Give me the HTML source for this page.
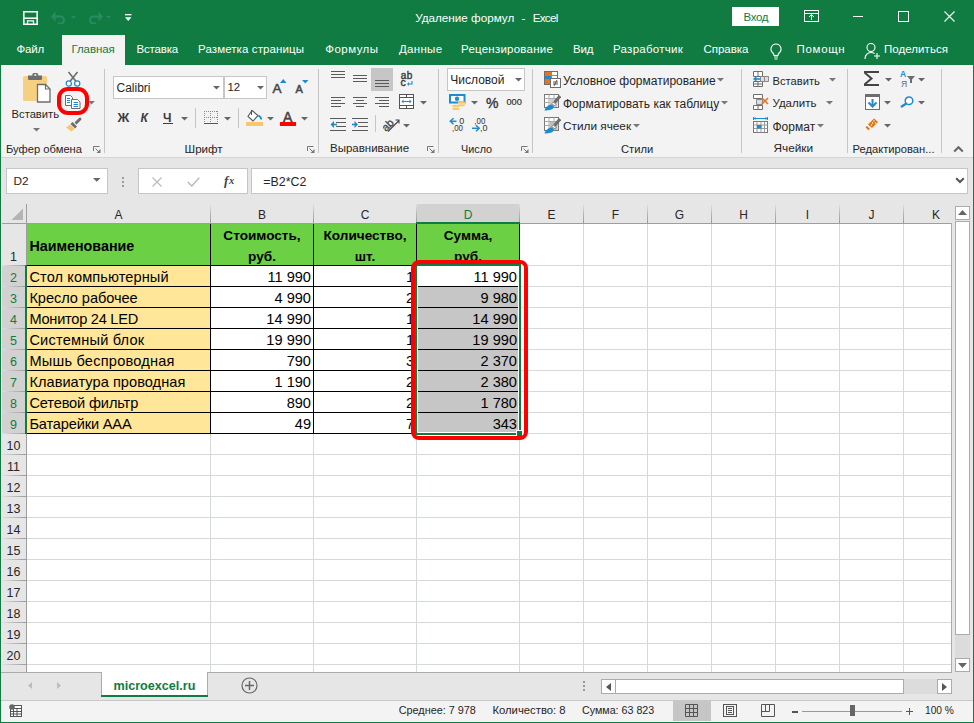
<!DOCTYPE html><html><head><meta charset="utf-8"><style>
*{box-sizing:border-box;margin:0;padding:0}
html,body{width:974px;height:723px;overflow:hidden;background:#107c41;font-family:"Liberation Sans",sans-serif;color:#262626;position:relative}
.a{position:absolute}
.t{position:absolute;white-space:nowrap;line-height:1}
.c{position:absolute;font-size:14.6px;color:#000;white-space:nowrap;line-height:1}
.cb{position:absolute;font-size:13.6px;font-weight:bold;color:#000;white-space:nowrap;line-height:1}
.hl{position:absolute;height:1px}
.vl{position:absolute;width:1px}
</style></head><body>
<div class="a" style="left:0px;top:0px;width:974px;height:65px;background:#107c41;"></div>
<svg class="a" style="left:23px;top:11px" width="15" height="14" viewBox="0 0 15 14"><path d="M0.8 0.8h13.4v12.4H0.8z" fill="none" stroke="#fff" stroke-width="1.6"/><path d="M0.8 7.2h13.4" stroke="#fff" stroke-width="1.5"/><path d="M4.5 13V9.8h6V13" fill="none" stroke="#fff" stroke-width="1.3"/></svg>
<svg class="a" style="left:51px;top:11px" width="16" height="13" viewBox="0 0 16 13"><path d="M3 5.5h6.5a3.5 3.5 0 0 1 0 7H7" fill="none" stroke="#2a8a62" stroke-width="2.2"/><path d="M0 5.5l4.5-5v10z" fill="#2a8a62"/></svg>
<svg class="a" style="left:71px;top:16px" width="6" height="3" viewBox="0 0 6 3"><path d="M0 0h5L2.5 2.5z" fill="#2a8a62"/></svg>
<svg class="a" style="left:87px;top:11px" width="16" height="13" viewBox="0 0 16 13"><path d="M13 5.5H6.5a3.5 3.5 0 0 0 0 7H9" fill="none" stroke="#2a8a62" stroke-width="2.2"/><path d="M16 5.5l-4.5-5v10z" fill="#2a8a62"/></svg>
<svg class="a" style="left:106px;top:16px" width="6" height="3" viewBox="0 0 6 3"><path d="M0 0h5L2.5 2.5z" fill="#2a8a62"/></svg>
<svg class="a" style="left:125px;top:14px" width="7" height="8" viewBox="0 0 7 8"><rect x="0" y="0" width="6.5" height="1.3" fill="#fff"/><path d="M0 3.2h6.5L3.25 7z" fill="#fff"/></svg>
<div class="t" style="left:415.2px;top:11.90px;font-size:11.70px;color:#fff;">Удаление формул</div>
<div class="t" style="left:521.5px;top:11.90px;font-size:11.70px;color:#fff;">-</div>
<div class="t" style="left:532.7px;top:11.90px;font-size:11.70px;color:#fff;letter-spacing:-0.75px;">Excel</div>
<div class="a" style="left:732px;top:7px;width:47px;height:19px;background:#fff;"></div>
<div class="t" style="left:743.5px;top:11.77px;font-size:11.50px;color:#107c41;letter-spacing:-0.35px;">Вход</div>
<svg class="a" style="left:804px;top:10px" width="15" height="12" viewBox="0 0 15 12"><rect x="0.5" y="0.5" width="14" height="11" fill="none" stroke="#fff"/><path d="M0.5 3.5h14" stroke="#fff"/><path d="M7.5 10V5M5 7l2.5-2.5L10 7" fill="none" stroke="#fff"/></svg>
<div class="a" style="left:853px;top:16px;width:10px;height:1px;background:#fff;"></div>
<svg class="a" style="left:898px;top:11px" width="11" height="11" viewBox="0 0 11 11"><rect x="0.5" y="0.5" width="10" height="10" fill="none" stroke="#fff"/></svg>
<svg class="a" style="left:944px;top:11px" width="11" height="11" viewBox="0 0 11 11"><path d="M0.5 0.5l10 10M10.5 0.5l-10 10" stroke="#fff" stroke-width="1.1"/></svg>
<div class="a" style="left:62px;top:35px;width:63px;height:30px;background:#f3f3f3;"></div>
<div class="t" style="left:16.4px;top:44.27px;font-size:11.50px;color:#fff;letter-spacing:-0.15px;">Файл</div>
<div class="t" style="left:71.5px;top:44.27px;font-size:11.50px;color:#107c41;letter-spacing:-0.10px;">Главная</div>
<div class="t" style="left:136.6px;top:44.27px;font-size:11.50px;color:#fff;letter-spacing:-0.20px;">Вставка</div>
<div class="t" style="left:198.0px;top:44.27px;font-size:11.50px;color:#fff;letter-spacing:0.10px;">Разметка страницы</div>
<div class="t" style="left:325.3px;top:44.27px;font-size:11.50px;color:#fff;letter-spacing:0.45px;">Формулы</div>
<div class="t" style="left:399.0px;top:44.27px;font-size:11.50px;color:#fff;letter-spacing:0.30px;">Данные</div>
<div class="t" style="left:461.0px;top:44.27px;font-size:11.50px;color:#fff;letter-spacing:0.23px;">Рецензирование</div>
<div class="t" style="left:573.0px;top:44.27px;font-size:11.50px;color:#fff;letter-spacing:-0.20px;">Вид</div>
<div class="t" style="left:613.0px;top:44.27px;font-size:11.50px;color:#fff;letter-spacing:0.27px;">Разработчик</div>
<div class="t" style="left:703.4px;top:44.27px;font-size:11.50px;color:#fff;letter-spacing:0.00px;">Справка</div>
<div class="t" style="left:796.5px;top:44.27px;font-size:11.50px;color:#fff;letter-spacing:0.69px;">Помощн</div>
<div class="t" style="left:884.0px;top:44.27px;font-size:11.50px;color:#fff;letter-spacing:0.05px;">Поделиться</div>
<svg class="a" style="left:769px;top:43px" width="14" height="17" viewBox="0 0 14 17"><path d="M7 1a5 5 0 0 0-3 9c.8.7 1 1.5 1 2.5h4c0-1 .2-1.8 1-2.5A5 5 0 0 0 7 1z" fill="none" stroke="#fff" stroke-width="1.1"/><path d="M5 14h4M5.5 16h3" stroke="#fff" stroke-width="1.1"/></svg>
<svg class="a" style="left:864px;top:42px" width="17" height="18" viewBox="0 0 17 18"><circle cx="7" cy="5.5" r="4" fill="none" stroke="#fff" stroke-width="1.1"/><path d="M1 17c0-4 2.5-6.5 6-6.5 1.5 0 2.7.4 3.6 1.1" fill="none" stroke="#fff" stroke-width="1.1"/><path d="M13 11v6M10 14h6" stroke="#fff" stroke-width="1.1"/></svg>
<div class="a" style="left:1px;top:65px;width:972px;height:92px;background:#f3f3f3;"></div>
<div class="a" style="left:1px;top:157px;width:972px;height:1px;background:#d4d4d4;"></div>
<div class="a" style="left:104px;top:69px;width:1px;height:84px;background:#c6c6c6;"></div>
<div class="a" style="left:318px;top:69px;width:1px;height:84px;background:#c6c6c6;"></div>
<div class="a" style="left:438px;top:69px;width:1px;height:84px;background:#c6c6c6;"></div>
<div class="a" style="left:532px;top:69px;width:1px;height:84px;background:#c6c6c6;"></div>
<div class="a" style="left:741px;top:69px;width:1px;height:84px;background:#c6c6c6;"></div>
<div class="a" style="left:847px;top:69px;width:1px;height:84px;background:#c6c6c6;"></div>
<div class="a" style="left:941px;top:69px;width:1px;height:84px;background:#c6c6c6;"></div>
<svg class="a" style="left:23px;top:72px" width="29" height="31" viewBox="0 0 29 31"><rect x="0" y="4" width="24" height="25" rx="1.5" fill="#f7cf80"/><path d="M5 3.5h14v3.2a1.3 1.3 0 0 1-1.3 1.3H6.3A1.3 1.3 0 0 1 5 6.7z" fill="#6d6d6d"/><rect x="9.4" y="1" width="5.8" height="4" rx="1.5" fill="#6d6d6d"/><rect x="11.3" y="2.2" width="2" height="1.6" fill="#f3f3f3"/><path d="M14.5 12.5h8l4.5 4.5v13H14.5z" fill="#fff" stroke="#6d6d6d" stroke-width="1.3"/><path d="M22.5 12.5v4.5H27" fill="none" stroke="#6d6d6d" stroke-width="1.2"/></svg>
<div class="t" style="left:11.6px;top:108.52px;font-size:11.20px;color:#262626;">Вставить</div>
<svg class="a" style="left:33px;top:128px" width="7" height="4" viewBox="0 0 7 4"><path d="M0 0H7L3.5 3.5z" fill="#777"/></svg>
<svg class="a" style="left:65px;top:71px" width="16" height="16" viewBox="0 0 16 16"><path d="M3.5 1l8 10M12.5 1l-8 10" stroke="#6d6d6d" stroke-width="1.6"/><circle cx="3.8" cy="12.5" r="2.6" fill="#fff" stroke="#1e8bcd" stroke-width="1.2"/><circle cx="12.2" cy="12.5" r="2.6" fill="#fff" stroke="#1e8bcd" stroke-width="1.2"/></svg>
<svg class="a" style="left:65px;top:95px" width="16" height="14" viewBox="0 0 16 14"><path d="M0.5 0.5h5l2 2v8h-7z" fill="#fff" stroke="#6d6d6d"/><path d="M6.5 4.5h6l2.5 2.5v6.5h-8.5z" fill="#fff" stroke="#6d6d6d"/><path d="M2 3.5h3M2 5.5h3M2 7.5h3M8.5 7.5h4.5M8.5 9.5h4.5M8.5 11.5h4.5" stroke="#1e8bcd"/></svg>
<svg class="a" style="left:88px;top:101px" width="7" height="4" viewBox="0 0 7 4"><path d="M0 0H7L3.5 3.5z" fill="#777"/></svg>
<svg class="a" style="left:65px;top:117px" width="17" height="15" viewBox="0 0 17 15"><path d="M9.5 5.5L14 1a1.4 1.4 0 0 1 2 2L11.5 7.5z" fill="#6d6d6d"/><path d="M7.5 5l4.5 4.5-2 2L5.5 7z" fill="#6d6d6d"/><path d="M5 7.5l4.5 4.5-3 2.5L1 10.5z" fill="#f6c86a"/></svg>
<div class="a" style="left:57px;top:87px;width:32px;height:28px;border:4px solid #f00;border-radius:11px"></div>
<div class="t" style="left:6.0px;top:143.52px;font-size:11.20px;color:#262626;">Буфер обмена</div>
<svg class="a" style="left:93px;top:146px" width="8" height="7" viewBox="0 0 8 7"><path d="M0.5 5V0.5H6.5" fill="none" stroke="#777"/><path d="M2.5 2.5l4 4" stroke="#777"/><path d="M7.5 3v4h-4z" fill="#777"/></svg>
<div class="a" style="left:113px;top:76px;width:111px;height:23px;background:#fff;border:1px solid #c6c6c6"></div>
<div class="a" style="left:224px;top:76px;width:43px;height:23px;background:#fff;border:1px solid #c6c6c6"></div>
<div class="t" style="left:116.5px;top:81.84px;font-size:12.00px;color:#262626;">Calibri</div>
<svg class="a" style="left:213px;top:86px" width="7" height="4" viewBox="0 0 7 4"><path d="M0 0H7L3.5 3.5z" fill="#666"/></svg>
<div class="t" style="left:227.5px;top:82.35px;font-size:11.40px;color:#262626;">12</div>
<svg class="a" style="left:257px;top:86px" width="7" height="4" viewBox="0 0 7 4"><path d="M0 0H7L3.5 3.5z" fill="#666"/></svg>
<div class="t" style="left:272.5px;top:81.57px;font-size:13.50px;color:#444;-webkit-text-stroke:0.5px #444;">A</div>
<svg class="a" style="left:280px;top:79px" width="7" height="4" viewBox="0 0 7 4"><path d="M0 4h6.5L3.25 0z" fill="#1e8bcd"/></svg>
<div class="t" style="left:295.5px;top:83.69px;font-size:11.00px;color:#444;-webkit-text-stroke:0.5px #444;">A</div>
<svg class="a" style="left:302px;top:80px" width="7" height="4" viewBox="0 0 7 4"><path d="M0 0h6.5L3.25 3.5z" fill="#1e8bcd"/></svg>
<div class="t" style="left:117.5px;top:111.20px;font-size:13.00px;color:#3c3c3c;font-weight:bold;">Ж</div>
<div class="t" style="left:140.5px;top:111.84px;font-size:12.00px;color:#3c3c3c;font-weight:bold;font-style:italic;">К</div>
<div class="t" style="left:163.0px;top:111.84px;font-size:12.00px;color:#3c3c3c;font-weight:bold;">Ч</div>
<div class="a" style="left:163px;top:123px;width:10px;height:1.4px;background:#3c3c3c;"></div>
<svg class="a" style="left:181px;top:117px" width="7" height="4" viewBox="0 0 7 4"><path d="M0 0H7L3.5 3.5z" fill="#666"/></svg>
<div class="a" style="left:195px;top:108px;width:1px;height:20px;background:#c6c6c6;"></div>
<svg class="a" style="left:204px;top:111px" width="14" height="13" viewBox="0 0 14 13"><path d="M0 0.5h14M0 6.5h14M0.5 0v12M6.5 0v12M13.5 0v12" stroke="#8a8a8a" stroke-dasharray="1 1"/><path d="M0 12.5h14" stroke="#555"/></svg>
<svg class="a" style="left:224px;top:117px" width="7" height="4" viewBox="0 0 7 4"><path d="M0 0H7L3.5 3.5z" fill="#666"/></svg>
<div class="a" style="left:238px;top:108px;width:1px;height:20px;background:#c6c6c6;"></div>
<svg class="a" style="left:246px;top:109px" width="17" height="17" viewBox="0 0 17 17"><path d="M6 1.5l6 5-5 5.5-5-4.5z" fill="#fff" stroke="#555" stroke-width="1.1"/><path d="M5.5 1v5" stroke="#555"/><path d="M12.5 6.5c1.5 1 3 2.5 2.5 4" fill="none" stroke="#1e8bcd" stroke-width="1.8"/><rect x="0" y="13" width="17" height="4" fill="#f6c86a"/></svg>
<svg class="a" style="left:267px;top:117px" width="7" height="4" viewBox="0 0 7 4"><path d="M0 0H7L3.5 3.5z" fill="#666"/></svg>
<div class="t" style="left:283.0px;top:110.35px;font-size:14.00px;color:#444;-webkit-text-stroke:0.5px #444;">A</div>
<div class="a" style="left:280px;top:122px;width:16px;height:4px;background:#f00;"></div>
<svg class="a" style="left:301px;top:117px" width="7" height="4" viewBox="0 0 7 4"><path d="M0 0H7L3.5 3.5z" fill="#666"/></svg>
<div class="t" style="left:184.5px;top:143.18px;font-size:11.60px;color:#262626;">Шрифт</div>
<svg class="a" style="left:307px;top:146px" width="8" height="7" viewBox="0 0 8 7"><path d="M0.5 5V0.5H6.5" fill="none" stroke="#777"/><path d="M2.5 2.5l4 4" stroke="#777"/><path d="M7.5 3v4h-4z" fill="#777"/></svg>
<div class="a" style="left:331px;top:71px;width:14px;height:1px;background:#5a5a5a;"></div>
<div class="a" style="left:331px;top:74px;width:14px;height:1px;background:#5a5a5a;"></div>
<div class="a" style="left:331px;top:77px;width:14px;height:1px;background:#5a5a5a;"></div>
<div class="a" style="left:353px;top:75px;width:14px;height:1px;background:#5a5a5a;"></div>
<div class="a" style="left:353px;top:78px;width:14px;height:1px;background:#5a5a5a;"></div>
<div class="a" style="left:353px;top:81px;width:14px;height:1px;background:#5a5a5a;"></div>
<div class="a" style="left:371px;top:68px;width:22px;height:23px;background:#c6c6c6;"></div>
<div class="a" style="left:375px;top:80px;width:14px;height:1px;background:#5a5a5a;"></div>
<div class="a" style="left:375px;top:83px;width:14px;height:1px;background:#5a5a5a;"></div>
<div class="a" style="left:375px;top:86px;width:14px;height:1px;background:#5a5a5a;"></div>
<div class="t" style="left:400.8px;top:71.33px;font-size:10.00px;color:#3a3a3a;-webkit-text-stroke:0.4px #3a3a3a;letter-spacing:0.5px;">ab</div>
<div class="t" style="left:400.6px;top:77.11px;font-size:10.50px;color:#3a3a3a;-webkit-text-stroke:0.4px #3a3a3a;">c</div>
<svg class="a" style="left:407px;top:81px" width="6" height="5" viewBox="0 0 6 5"><path d="M5 0v3H2" fill="none" stroke="#1e8bcd" stroke-width="1.1"/><path d="M0 3l2-2v4z" fill="#1e8bcd"/></svg>
<div class="a" style="left:331px;top:97px;width:14px;height:1px;background:#5a5a5a;"></div>
<div class="a" style="left:331px;top:100px;width:10px;height:1px;background:#5a5a5a;"></div>
<div class="a" style="left:331px;top:103px;width:14px;height:1px;background:#5a5a5a;"></div>
<div class="a" style="left:331px;top:106px;width:10px;height:1px;background:#5a5a5a;"></div>
<div class="a" style="left:353px;top:97px;width:14px;height:1px;background:#5a5a5a;"></div>
<div class="a" style="left:356px;top:100px;width:8px;height:1px;background:#5a5a5a;"></div>
<div class="a" style="left:353px;top:103px;width:14px;height:1px;background:#5a5a5a;"></div>
<div class="a" style="left:356px;top:106px;width:8px;height:1px;background:#5a5a5a;"></div>
<div class="a" style="left:375px;top:97px;width:14px;height:1px;background:#5a5a5a;"></div>
<div class="a" style="left:379px;top:100px;width:10px;height:1px;background:#5a5a5a;"></div>
<div class="a" style="left:375px;top:103px;width:14px;height:1px;background:#5a5a5a;"></div>
<div class="a" style="left:379px;top:106px;width:10px;height:1px;background:#5a5a5a;"></div>
<svg class="a" style="left:399px;top:94px" width="16" height="15" viewBox="0 0 16 15"><rect x="0.5" y="0.5" width="14" height="14" fill="#fff" stroke="#555"/><path d="M0.5 3.5h14M0.5 11.5h14M7.5 0.5v3M7.5 11.5v3" stroke="#555"/><path d="M3 7.5h9" stroke="#1e8bcd"/><path d="M2.5 7.5l2-2v4zM12.5 7.5l-2-2v4z" fill="#1e8bcd"/></svg>
<svg class="a" style="left:420px;top:101px" width="7" height="4" viewBox="0 0 7 4"><path d="M0 0H7L3.5 3.5z" fill="#666"/></svg>
<svg class="a" style="left:330px;top:118px" width="16" height="14" viewBox="0 0 16 14"><path d="M0 0.5h16M6 4.5h10M6 8.5h10M0 12.5h16" stroke="#5a5a5a"/><path d="M0.5 6.5l3.5-3.5v7z" fill="#1e8bcd"/><path d="M3 6.5h4" stroke="#1e8bcd" stroke-width="1.6"/></svg>
<svg class="a" style="left:352px;top:118px" width="16" height="14" viewBox="0 0 16 14"><path d="M0 0.5h16M6 4.5h10M6 8.5h10M0 12.5h16" stroke="#5a5a5a"/><path d="M5 6.5L1.5 3v7z" fill="#1e8bcd" transform="translate(1 0)"/><path d="M0 6.5h4" stroke="#1e8bcd" stroke-width="1.6"/></svg>
<div class="a" style="left:375px;top:115px;width:1px;height:17px;background:#c6c6c6;"></div>
<svg class="a" style="left:383px;top:117px" width="17" height="15" viewBox="0 0 17 15"><text x="-1.5" y="11.5" font-family="Liberation Sans" font-size="11" fill="#444" stroke="#444" stroke-width="0.3" transform="rotate(-45 5 8)">ab</text><path d="M5 14.5L16 3.5M12.5 3h3.5v3.5" fill="none" stroke="#444" stroke-width="1.1"/></svg>
<svg class="a" style="left:403px;top:124px" width="7" height="4" viewBox="0 0 7 4"><path d="M0 0H7L3.5 3.5z" fill="#666"/></svg>
<div class="t" style="left:330.0px;top:143.27px;font-size:11.50px;color:#262626;">Выравнивание</div>
<svg class="a" style="left:427px;top:146px" width="8" height="7" viewBox="0 0 8 7"><path d="M0.5 5V0.5H6.5" fill="none" stroke="#777"/><path d="M2.5 2.5l4 4" stroke="#777"/><path d="M7.5 3v4h-4z" fill="#777"/></svg>
<div class="a" style="left:447px;top:68px;width:78px;height:23px;background:#fff;border:1px solid #c6c6c6"></div>
<div class="t" style="left:450.3px;top:73.84px;font-size:12.00px;color:#262626;">Числовой</div>
<svg class="a" style="left:515px;top:78px" width="7" height="4" viewBox="0 0 7 4"><path d="M0 0H7L3.5 3.5z" fill="#666"/></svg>
<svg class="a" style="left:449px;top:94px" width="18" height="17" viewBox="0 0 18 17"><rect x="1" y="1" width="14.5" height="7.5" fill="#fff" stroke="#1e8bcd" stroke-width="2"/><circle cx="8" cy="4.8" r="2.2" fill="#1e8bcd"/><circle cx="8.6" cy="4.4" r="0.9" fill="#2aa58a"/><ellipse cx="12.5" cy="8.5" rx="3.6" ry="1.5" fill="#f6c86a"/><ellipse cx="12.5" cy="10.7" rx="3.6" ry="1.5" fill="#f6c86a"/><path d="M9 10h7" stroke="#fff" stroke-width="0.6"/><ellipse cx="6.8" cy="12.2" rx="3.6" ry="1.5" fill="#f6c86a"/><ellipse cx="6.8" cy="14.6" rx="3.6" ry="1.5" fill="#f6c86a"/><path d="M3.2 13.4h7.2" stroke="#fff" stroke-width="0.6"/></svg>
<svg class="a" style="left:471px;top:101px" width="7" height="4" viewBox="0 0 7 4"><path d="M0 0H7L3.5 3.5z" fill="#666"/></svg>
<div class="t" style="left:486.0px;top:95.95px;font-size:14.00px;color:#333;-webkit-text-stroke:0.35px #333;">%</div>
<div class="t" style="left:506.5px;top:97.71px;font-size:9.20px;color:#333;-webkit-text-stroke:0.2px #333;">000</div>
<svg class="a" style="left:449px;top:117px" width="17" height="16" viewBox="0 0 17 16"><path d="M2 4.3h5.5" stroke="#1e8bcd" stroke-width="1.5"/><path d="M4.5 1.3L1.3 4.3l3.2 3" fill="none" stroke="#1e8bcd" stroke-width="1.5"/><text x="10.3" y="6.6" font-family="Liberation Sans" font-size="9" fill="#333">0</text><text x="3" y="13.6" font-family="Liberation Sans" font-size="9" fill="#333" textLength="11" lengthAdjust="spacingAndGlyphs">,00</text></svg>
<svg class="a" style="left:471px;top:117px" width="17" height="16" viewBox="0 0 17 16"><text x="3.3" y="6.6" font-family="Liberation Sans" font-size="9" fill="#333" textLength="11" lengthAdjust="spacingAndGlyphs">,00</text><path d="M1 11.3h6" stroke="#1e8bcd" stroke-width="1.5"/><path d="M5 8.3l3.2 3-3.2 3" fill="none" stroke="#1e8bcd" stroke-width="1.5"/><text x="9" y="13.6" font-family="Liberation Sans" font-size="9" fill="#333">,0</text></svg>
<div class="t" style="left:461.0px;top:143.86px;font-size:10.80px;color:#262626;">Число</div>
<svg class="a" style="left:521px;top:146px" width="8" height="7" viewBox="0 0 8 7"><path d="M0.5 5V0.5H6.5" fill="none" stroke="#777"/><path d="M2.5 2.5l4 4" stroke="#777"/><path d="M7.5 3v4h-4z" fill="#777"/></svg>
<svg class="a" style="left:544px;top:71px" width="17" height="17" viewBox="0 0 17 17"><rect x="0.5" y="0.5" width="13" height="13" fill="#fff" stroke="#6d6d6d"/><rect x="1" y="1" width="6" height="3.5" fill="#e5741f"/><rect x="1" y="5" width="6" height="3.5" fill="#1e8bcd"/><rect x="1" y="9" width="6" height="4" fill="#e5741f"/><path d="M7.5 1v12M1 4.5h12M1 8.5h12" stroke="#8a8a8a"/><rect x="6.5" y="7.5" width="10" height="9" fill="#fff" stroke="#6d6d6d"/><path d="M9 11h5M9 13h5M10 15l3-6" stroke="#444" stroke-width="0.9"/></svg>
<div class="t" style="left:563.0px;top:74.84px;font-size:12.00px;color:#262626;">Условное форматирование</div>
<svg class="a" style="left:717px;top:78px" width="7" height="4" viewBox="0 0 7 4"><path d="M0 0H7L3.5 3.5z" fill="#777"/></svg>
<svg class="a" style="left:544px;top:94px" width="17" height="17" viewBox="0 0 17 17"><rect x="0.5" y="0.5" width="14" height="13" fill="#fff" stroke="#777"/><path d="M0.5 4.5h14M0.5 8.5h14M5 0.5v13M10 0.5v13" stroke="#aaa"/><rect x="5.5" y="5" width="8" height="8" fill="#cfcfcf"/><path d="M16 2L10.5 8.5" stroke="#6d6d6d" stroke-width="3"/><path d="M9.5 8l2.5 2.5-1.5 1.5-2.5-2.5z" fill="#fff" stroke="#555" stroke-width="0.7"/><path d="M0.5 16.5C1.5 13 4.5 10.5 8 10.5l2 2.2C9.5 15.5 5 16.5 0.5 16.5z" fill="#1e8bcd"/></svg>
<div class="t" style="left:563.0px;top:97.84px;font-size:12.00px;color:#262626;">Форматировать как таблицу</div>
<svg class="a" style="left:721px;top:101px" width="7" height="4" viewBox="0 0 7 4"><path d="M0 0H7L3.5 3.5z" fill="#777"/></svg>
<svg class="a" style="left:544px;top:117px" width="17" height="17" viewBox="0 0 17 17"><rect x="0.5" y="0.5" width="14" height="13" fill="#fff" stroke="#777"/><path d="M0.5 4.5h14M0.5 8.5h14M5 0.5v13M10 0.5v13" stroke="#aaa"/><rect x="5.5" y="5" width="8" height="8" fill="#bdbdbd"/><path d="M16 2L10.5 8.5" stroke="#6d6d6d" stroke-width="3"/><path d="M9.5 8l2.5 2.5-1.5 1.5-2.5-2.5z" fill="#fff" stroke="#555" stroke-width="0.7"/><path d="M0.5 16.5C1.5 13 4.5 10.5 8 10.5l2 2.2C9.5 15.5 5 16.5 0.5 16.5z" fill="#1e8bcd"/></svg>
<div class="t" style="left:563.0px;top:121.01px;font-size:11.80px;color:#262626;">Стили ячеек</div>
<svg class="a" style="left:633px;top:124px" width="7" height="4" viewBox="0 0 7 4"><path d="M0 0H7L3.5 3.5z" fill="#777"/></svg>
<div class="t" style="left:621.0px;top:143.52px;font-size:11.20px;color:#262626;">Стили</div>
<svg class="a" style="left:753px;top:71px" width="17" height="16" viewBox="0 0 17 16"><path d="M0.5 0.5h9v5h-9zM0.5 10.5h9v5h-9z" fill="#fff" stroke="#6d6d6d"/><path d="M5 0.5v5M5 10.5v5M0.5 13h9" stroke="#6d6d6d"/><path d="M7.5 5.5h8v5h-8z" fill="#ddd" stroke="#8a8a8a"/><path d="M11.5 5.5v5" stroke="#8a8a8a"/><path d="M2 8h5" stroke="#1e8bcd" stroke-width="1.6"/><path d="M0 8l3.5-3v6z" fill="#1e8bcd"/></svg>
<div class="t" style="left:772.5px;top:75.52px;font-size:11.20px;color:#262626;">Вставить</div>
<svg class="a" style="left:829px;top:78px" width="7" height="4" viewBox="0 0 7 4"><path d="M0 0H7L3.5 3.5z" fill="#777"/></svg>
<svg class="a" style="left:753px;top:94px" width="17" height="16" viewBox="0 0 17 16"><path d="M0.5 0.5h9v4h-9zM0.5 11.5h9v4h-9z" fill="#fff" stroke="#6d6d6d"/><path d="M5 11.5v4" stroke="#6d6d6d"/><path d="M3.5 5.5h6v5h-6z" fill="#ddd" stroke="#8a8a8a"/><path d="M9 4l6 6M15 4l-6 6" stroke="#e5741f" stroke-width="1.6"/></svg>
<div class="t" style="left:772.5px;top:98.27px;font-size:11.50px;color:#262626;">Удалить</div>
<svg class="a" style="left:826px;top:101px" width="7" height="4" viewBox="0 0 7 4"><path d="M0 0H7L3.5 3.5z" fill="#777"/></svg>
<svg class="a" style="left:753px;top:117px" width="15" height="16" viewBox="0 0 15 16"><path d="M0.5 0v3M14.5 0v3M2 1.5h11" stroke="#1e8bcd"/><path d="M0.5 1.5l2-1.5v3zM14.5 1.5l-2-1.5v3z" fill="#1e8bcd"/><rect x="0.5" y="4.5" width="14" height="11" fill="#fff" stroke="#777"/><path d="M0.5 8h14M0.5 11.5h14M4 4.5v11M8 4.5v11M11.5 4.5v11" stroke="#999"/><rect x="4" y="8" width="4.5" height="3.5" fill="#1e8bcd"/></svg>
<div class="t" style="left:772.5px;top:120.84px;font-size:12.00px;color:#262626;">Формат</div>
<svg class="a" style="left:817px;top:124px" width="7" height="4" viewBox="0 0 7 4"><path d="M0 0H7L3.5 3.5z" fill="#777"/></svg>
<div class="t" style="left:773.5px;top:143.01px;font-size:11.80px;color:#262626;">Ячейки</div>
<svg class="a" style="left:863px;top:71px" width="17" height="15" viewBox="0 0 17 15"><path d="M1 1h15M1 14h15M1.5 1.5l7 6-7 6" fill="none" stroke="#444" stroke-width="2"/></svg>
<svg class="a" style="left:885px;top:78px" width="7" height="4" viewBox="0 0 7 4"><path d="M0 0H7L3.5 3.5z" fill="#666"/></svg>
<div class="t" style="left:900.0px;top:70.40px;font-size:8.50px;color:#1e8bcd;font-weight:bold;">A</div>
<div class="t" style="left:901.0px;top:79.80px;font-size:8.50px;color:#666;">Я</div>
<svg class="a" style="left:907px;top:76px" width="9" height="7" viewBox="0 0 9 7"><path d="M0 0h8L5 3.5V7H3V3.5z" fill="#6d6d6d"/></svg>
<svg class="a" style="left:918px;top:78px" width="7" height="4" viewBox="0 0 7 4"><path d="M0 0H7L3.5 3.5z" fill="#666"/></svg>
<svg class="a" style="left:865px;top:94px" width="15" height="16" viewBox="0 0 15 16"><rect x="0.5" y="0.5" width="14" height="15" fill="#fff" stroke="#6d6d6d"/><rect x="0" y="0" width="15" height="3" fill="#6d6d6d"/><path d="M7.5 5v7" stroke="#1e8bcd" stroke-width="2"/><path d="M3.5 8.5l4 4 4-4" fill="none" stroke="#1e8bcd" stroke-width="2"/></svg>
<svg class="a" style="left:884px;top:101px" width="7" height="4" viewBox="0 0 7 4"><path d="M0 0H7L3.5 3.5z" fill="#666"/></svg>
<svg class="a" style="left:900px;top:96px" width="14" height="12" viewBox="0 0 14 12"><circle cx="9" cy="4.8" r="3.8" fill="#fff" stroke="#1e8bcd" stroke-width="1.5"/><path d="M6.3 7.5L1 11" stroke="#1e8bcd" stroke-width="2.2"/></svg>
<svg class="a" style="left:918px;top:101px" width="7" height="4" viewBox="0 0 7 4"><path d="M0 0H7L3.5 3.5z" fill="#666"/></svg>
<svg class="a" style="left:864px;top:117px" width="15" height="14" viewBox="0 0 15 14"><path d="M4 7.5L10 1.5 14 5 8 11z" fill="#e27311"/><circle cx="10" cy="4" r="0.7" fill="#fff"/><circle cx="8.5" cy="6" r="0.7" fill="#fff"/><circle cx="11.5" cy="6" r="0.7" fill="#fff"/><circle cx="7.5" cy="8" r="0.7" fill="#fff"/><path d="M2.2 9.8L5.2 12.6" stroke="#e27311" stroke-width="2"/></svg>
<svg class="a" style="left:884px;top:124px" width="7" height="4" viewBox="0 0 7 4"><path d="M0 0H7L3.5 3.5z" fill="#666"/></svg>
<div class="t" style="left:852.5px;top:143.52px;font-size:11.20px;color:#262626;">Редактирован...</div>
<svg class="a" style="left:953px;top:145px" width="11" height="8" viewBox="0 0 11 8"><path d="M1.2 6.5l4.3-4.3 4.3 4.3" fill="none" stroke="#666" stroke-width="2"/></svg>
<div class="a" style="left:1px;top:158px;width:972px;height:564px;background:#e6e6e6;"></div>
<div class="a" style="left:6px;top:168px;width:102px;height:26px;background:#fff;border:1px solid #c6c6c6"></div>
<div class="t" style="left:13.5px;top:176.01px;font-size:11.80px;color:#262626;">D2</div>
<svg class="a" style="left:93px;top:178px" width="8" height="4" viewBox="0 0 8 4"><path d="M0 0h7.5L3.75 3.8z" fill="#666"/></svg>
<div class="a" style="left:122px;top:177px;width:2px;height:2px;background:#9a9a9a;"></div>
<div class="a" style="left:122px;top:181px;width:2px;height:2px;background:#9a9a9a;"></div>
<div class="a" style="left:122px;top:185px;width:2px;height:2px;background:#9a9a9a;"></div>
<div class="a" style="left:138px;top:168px;width:110px;height:26px;background:#fff;border:1px solid #c6c6c6"></div>
<svg class="a" style="left:152px;top:177px" width="10" height="10" viewBox="0 0 10 10"><path d="M0.5 0.5l9 9M9.5 0.5l-9 9" stroke="#bdbdbd" stroke-width="1.3"/></svg>
<svg class="a" style="left:187px;top:177px" width="13" height="10" viewBox="0 0 13 10"><path d="M0.8 5l4 4L12.3 0.8" fill="none" stroke="#bdbdbd" stroke-width="1.6"/></svg>
<div class="t" style="left:224.0px;top:173.80px;font-size:13.00px;color:#444;font-weight:bold;font-style:italic;font-family:'Liberation Serif',serif;">f</div>
<div class="t" style="left:229.0px;top:175.61px;font-size:10.50px;color:#444;font-weight:bold;font-style:italic;font-family:'Liberation Serif',serif;">x</div>
<div class="a" style="left:251px;top:168px;width:717px;height:26px;background:#fff;border:1px solid #c6c6c6"></div>
<div class="t" style="left:263.3px;top:175.80px;font-size:12.40px;color:#262626;">=B2*C2</div>
<svg class="a" style="left:955px;top:177px" width="10" height="7" viewBox="0 0 10 7"><path d="M1.2 1.2l3.8 3.8 3.8-3.8" fill="none" stroke="#555" stroke-width="2"/></svg>
<div class="a" style="left:27px;top:224px;width:924px;height:448px;background:#fff;"></div>
<div class="a" style="left:1px;top:204px;width:950px;height:19px;background:#e6e6e6;"></div>
<div class="a" style="left:1px;top:223px;width:25px;height:449px;background:#e6e6e6;"></div>
<div class="a" style="left:210px;top:224px;width:1px;height:448px;background:#d6d9d9;"></div>
<div class="a" style="left:313px;top:224px;width:1px;height:448px;background:#d6d9d9;"></div>
<div class="a" style="left:416px;top:224px;width:1px;height:448px;background:#d6d9d9;"></div>
<div class="a" style="left:519px;top:224px;width:1px;height:448px;background:#d6d9d9;"></div>
<div class="a" style="left:583px;top:224px;width:1px;height:448px;background:#d6d9d9;"></div>
<div class="a" style="left:647px;top:224px;width:1px;height:448px;background:#d6d9d9;"></div>
<div class="a" style="left:711px;top:224px;width:1px;height:448px;background:#d6d9d9;"></div>
<div class="a" style="left:775px;top:224px;width:1px;height:448px;background:#d6d9d9;"></div>
<div class="a" style="left:839px;top:224px;width:1px;height:448px;background:#d6d9d9;"></div>
<div class="a" style="left:903px;top:224px;width:1px;height:448px;background:#d6d9d9;"></div>
<div class="a" style="left:27px;top:265px;width:924px;height:1px;background:#d6d9d9;"></div>
<div class="a" style="left:27px;top:286px;width:924px;height:1px;background:#d6d9d9;"></div>
<div class="a" style="left:27px;top:307px;width:924px;height:1px;background:#d6d9d9;"></div>
<div class="a" style="left:27px;top:328px;width:924px;height:1px;background:#d6d9d9;"></div>
<div class="a" style="left:27px;top:349px;width:924px;height:1px;background:#d6d9d9;"></div>
<div class="a" style="left:27px;top:370px;width:924px;height:1px;background:#d6d9d9;"></div>
<div class="a" style="left:27px;top:391px;width:924px;height:1px;background:#d6d9d9;"></div>
<div class="a" style="left:27px;top:412px;width:924px;height:1px;background:#d6d9d9;"></div>
<div class="a" style="left:27px;top:433px;width:924px;height:1px;background:#d6d9d9;"></div>
<div class="a" style="left:27px;top:454px;width:924px;height:1px;background:#d6d9d9;"></div>
<div class="a" style="left:27px;top:475px;width:924px;height:1px;background:#d6d9d9;"></div>
<div class="a" style="left:27px;top:496px;width:924px;height:1px;background:#d6d9d9;"></div>
<div class="a" style="left:27px;top:517px;width:924px;height:1px;background:#d6d9d9;"></div>
<div class="a" style="left:27px;top:538px;width:924px;height:1px;background:#d6d9d9;"></div>
<div class="a" style="left:27px;top:559px;width:924px;height:1px;background:#d6d9d9;"></div>
<div class="a" style="left:27px;top:580px;width:924px;height:1px;background:#d6d9d9;"></div>
<div class="a" style="left:27px;top:601px;width:924px;height:1px;background:#d6d9d9;"></div>
<div class="a" style="left:27px;top:622px;width:924px;height:1px;background:#d6d9d9;"></div>
<div class="a" style="left:27px;top:643px;width:924px;height:1px;background:#d6d9d9;"></div>
<div class="a" style="left:27px;top:664px;width:924px;height:1px;background:#d6d9d9;"></div>
<div class="a" style="left:210px;top:204px;width:1px;height:19px;background:linear-gradient(#e2e2e2,#b8b8b8 50%,#9a9a9a);"></div>
<div class="a" style="left:313px;top:204px;width:1px;height:19px;background:linear-gradient(#e2e2e2,#b8b8b8 50%,#9a9a9a);"></div>
<div class="a" style="left:416px;top:204px;width:1px;height:19px;background:linear-gradient(#e2e2e2,#b8b8b8 50%,#9a9a9a);"></div>
<div class="a" style="left:519px;top:204px;width:1px;height:19px;background:linear-gradient(#e2e2e2,#b8b8b8 50%,#9a9a9a);"></div>
<div class="a" style="left:583px;top:204px;width:1px;height:19px;background:linear-gradient(#e2e2e2,#b8b8b8 50%,#9a9a9a);"></div>
<div class="a" style="left:647px;top:204px;width:1px;height:19px;background:linear-gradient(#e2e2e2,#b8b8b8 50%,#9a9a9a);"></div>
<div class="a" style="left:711px;top:204px;width:1px;height:19px;background:linear-gradient(#e2e2e2,#b8b8b8 50%,#9a9a9a);"></div>
<div class="a" style="left:775px;top:204px;width:1px;height:19px;background:linear-gradient(#e2e2e2,#b8b8b8 50%,#9a9a9a);"></div>
<div class="a" style="left:839px;top:204px;width:1px;height:19px;background:linear-gradient(#e2e2e2,#b8b8b8 50%,#9a9a9a);"></div>
<div class="a" style="left:903px;top:204px;width:1px;height:19px;background:linear-gradient(#e2e2e2,#b8b8b8 50%,#9a9a9a);"></div>
<div class="a" style="left:1px;top:265px;width:25px;height:1px;background:linear-gradient(to right,#e4e4e4,#c4c4c4 40%,#9a9a9a);"></div>
<div class="a" style="left:1px;top:286px;width:25px;height:1px;background:linear-gradient(to right,#e4e4e4,#c4c4c4 40%,#9a9a9a);"></div>
<div class="a" style="left:1px;top:307px;width:25px;height:1px;background:linear-gradient(to right,#e4e4e4,#c4c4c4 40%,#9a9a9a);"></div>
<div class="a" style="left:1px;top:328px;width:25px;height:1px;background:linear-gradient(to right,#e4e4e4,#c4c4c4 40%,#9a9a9a);"></div>
<div class="a" style="left:1px;top:349px;width:25px;height:1px;background:linear-gradient(to right,#e4e4e4,#c4c4c4 40%,#9a9a9a);"></div>
<div class="a" style="left:1px;top:370px;width:25px;height:1px;background:linear-gradient(to right,#e4e4e4,#c4c4c4 40%,#9a9a9a);"></div>
<div class="a" style="left:1px;top:391px;width:25px;height:1px;background:linear-gradient(to right,#e4e4e4,#c4c4c4 40%,#9a9a9a);"></div>
<div class="a" style="left:1px;top:412px;width:25px;height:1px;background:linear-gradient(to right,#e4e4e4,#c4c4c4 40%,#9a9a9a);"></div>
<div class="a" style="left:1px;top:433px;width:25px;height:1px;background:linear-gradient(to right,#e4e4e4,#c4c4c4 40%,#9a9a9a);"></div>
<div class="a" style="left:1px;top:454px;width:25px;height:1px;background:linear-gradient(to right,#e4e4e4,#c4c4c4 40%,#9a9a9a);"></div>
<div class="a" style="left:1px;top:475px;width:25px;height:1px;background:linear-gradient(to right,#e4e4e4,#c4c4c4 40%,#9a9a9a);"></div>
<div class="a" style="left:1px;top:496px;width:25px;height:1px;background:linear-gradient(to right,#e4e4e4,#c4c4c4 40%,#9a9a9a);"></div>
<div class="a" style="left:1px;top:517px;width:25px;height:1px;background:linear-gradient(to right,#e4e4e4,#c4c4c4 40%,#9a9a9a);"></div>
<div class="a" style="left:1px;top:538px;width:25px;height:1px;background:linear-gradient(to right,#e4e4e4,#c4c4c4 40%,#9a9a9a);"></div>
<div class="a" style="left:1px;top:559px;width:25px;height:1px;background:linear-gradient(to right,#e4e4e4,#c4c4c4 40%,#9a9a9a);"></div>
<div class="a" style="left:1px;top:580px;width:25px;height:1px;background:linear-gradient(to right,#e4e4e4,#c4c4c4 40%,#9a9a9a);"></div>
<div class="a" style="left:1px;top:601px;width:25px;height:1px;background:linear-gradient(to right,#e4e4e4,#c4c4c4 40%,#9a9a9a);"></div>
<div class="a" style="left:1px;top:622px;width:25px;height:1px;background:linear-gradient(to right,#e4e4e4,#c4c4c4 40%,#9a9a9a);"></div>
<div class="a" style="left:1px;top:643px;width:25px;height:1px;background:linear-gradient(to right,#e4e4e4,#c4c4c4 40%,#9a9a9a);"></div>
<div class="a" style="left:1px;top:664px;width:25px;height:1px;background:linear-gradient(to right,#e4e4e4,#c4c4c4 40%,#9a9a9a);"></div>
<div class="a" style="left:1px;top:223px;width:950px;height:1px;background:#9e9e9e;"></div>
<div class="a" style="left:26px;top:204px;width:1px;height:468px;background:#9e9e9e;"></div>
<svg class="a" style="left:11px;top:208px" width="13" height="13" viewBox="0 0 13 13"><path d="M12 0.5V12H0.5z" fill="#b4b4b4"/></svg>
<div class="a" style="left:951px;top:223px;width:1px;height:450px;background:#ababab;"></div>
<div class="a" style="left:1px;top:672px;width:951px;height:1px;background:#ababab;"></div>
<div class="t" style="left:27px;top:208.84px;width:183px;text-align:center;font-size:12px;color:#262626">A</div>
<div class="t" style="left:211px;top:208.84px;width:102px;text-align:center;font-size:12px;color:#262626">B</div>
<div class="t" style="left:314px;top:208.84px;width:102px;text-align:center;font-size:12px;color:#262626">C</div>
<div class="a" style="left:417px;top:204px;width:102px;height:18px;background:#d2d2d2;"></div>
<div class="a" style="left:416px;top:222px;width:104px;height:2px;background:#107c41;"></div>
<div class="t" style="left:417px;top:208.84px;width:102px;text-align:center;font-size:12px;color:#107c41">D</div>
<div class="t" style="left:520px;top:208.84px;width:63px;text-align:center;font-size:12px;color:#262626">E</div>
<div class="t" style="left:584px;top:208.84px;width:63px;text-align:center;font-size:12px;color:#262626">F</div>
<div class="t" style="left:648px;top:208.84px;width:63px;text-align:center;font-size:12px;color:#262626">G</div>
<div class="t" style="left:712px;top:208.84px;width:63px;text-align:center;font-size:12px;color:#262626">H</div>
<div class="t" style="left:776px;top:208.84px;width:63px;text-align:center;font-size:12px;color:#262626">I</div>
<div class="t" style="left:840px;top:208.84px;width:63px;text-align:center;font-size:12px;color:#262626">J</div>
<div class="t" style="left:904px;top:208.84px;width:64px;text-align:center;font-size:12px;color:#262626">K</div>
<div class="t" style="left:1px;top:250.92px;width:25px;text-align:center;font-size:12.5px;color:#262626">1</div>
<div class="a" style="left:1px;top:266px;width:24px;height:20px;background:#d2d2d2;"></div>
<div class="t" style="left:1px;top:271.92px;width:25px;text-align:center;font-size:12.5px;color:#107c41">2</div>
<div class="a" style="left:1px;top:287px;width:24px;height:20px;background:#d2d2d2;"></div>
<div class="t" style="left:1px;top:292.92px;width:25px;text-align:center;font-size:12.5px;color:#107c41">3</div>
<div class="a" style="left:1px;top:308px;width:24px;height:20px;background:#d2d2d2;"></div>
<div class="t" style="left:1px;top:313.92px;width:25px;text-align:center;font-size:12.5px;color:#107c41">4</div>
<div class="a" style="left:1px;top:329px;width:24px;height:20px;background:#d2d2d2;"></div>
<div class="t" style="left:1px;top:334.92px;width:25px;text-align:center;font-size:12.5px;color:#107c41">5</div>
<div class="a" style="left:1px;top:350px;width:24px;height:20px;background:#d2d2d2;"></div>
<div class="t" style="left:1px;top:355.92px;width:25px;text-align:center;font-size:12.5px;color:#107c41">6</div>
<div class="a" style="left:1px;top:371px;width:24px;height:20px;background:#d2d2d2;"></div>
<div class="t" style="left:1px;top:376.92px;width:25px;text-align:center;font-size:12.5px;color:#107c41">7</div>
<div class="a" style="left:1px;top:392px;width:24px;height:20px;background:#d2d2d2;"></div>
<div class="t" style="left:1px;top:397.92px;width:25px;text-align:center;font-size:12.5px;color:#107c41">8</div>
<div class="a" style="left:1px;top:413px;width:24px;height:20px;background:#d2d2d2;"></div>
<div class="t" style="left:1px;top:418.92px;width:25px;text-align:center;font-size:12.5px;color:#107c41">9</div>
<div class="t" style="left:1px;top:439.92px;width:25px;text-align:center;font-size:12.5px;color:#262626">10</div>
<div class="t" style="left:1px;top:460.92px;width:25px;text-align:center;font-size:12.5px;color:#262626">11</div>
<div class="t" style="left:1px;top:481.92px;width:25px;text-align:center;font-size:12.5px;color:#262626">12</div>
<div class="t" style="left:1px;top:502.92px;width:25px;text-align:center;font-size:12.5px;color:#262626">13</div>
<div class="t" style="left:1px;top:523.92px;width:25px;text-align:center;font-size:12.5px;color:#262626">14</div>
<div class="t" style="left:1px;top:544.92px;width:25px;text-align:center;font-size:12.5px;color:#262626">15</div>
<div class="t" style="left:1px;top:565.92px;width:25px;text-align:center;font-size:12.5px;color:#262626">16</div>
<div class="t" style="left:1px;top:586.92px;width:25px;text-align:center;font-size:12.5px;color:#262626">17</div>
<div class="t" style="left:1px;top:607.92px;width:25px;text-align:center;font-size:12.5px;color:#262626">18</div>
<div class="t" style="left:1px;top:628.92px;width:25px;text-align:center;font-size:12.5px;color:#262626">19</div>
<div class="t" style="left:1px;top:649.92px;width:25px;text-align:center;font-size:12.5px;color:#262626">20</div>
<div class="a" style="left:25px;top:265px;width:2px;height:169px;background:#107c41;"></div>
<div class="a" style="left:1px;top:204px;width:1px;height:468px;background:#f6f2f2;"></div>
<div class="a" style="left:27px;top:224px;width:492px;height:41px;background:#6cd044;"></div>
<div class="a" style="left:27px;top:266px;width:183px;height:167px;background:#ffe699;"></div>
<div class="a" style="left:418px;top:287px;width:100px;height:145px;background:#c6c6c6;"></div>
<div class="a" style="left:210px;top:224px;width:1px;height:210px;background:#000;"></div>
<div class="a" style="left:313px;top:224px;width:1px;height:210px;background:#000;"></div>
<div class="a" style="left:416px;top:224px;width:1px;height:210px;background:#000;"></div>
<div class="a" style="left:519px;top:224px;width:1px;height:210px;background:#000;"></div>
<div class="a" style="left:27px;top:265px;width:493px;height:1px;background:#000;"></div>
<div class="a" style="left:27px;top:286px;width:493px;height:1px;background:#000;"></div>
<div class="a" style="left:27px;top:307px;width:493px;height:1px;background:#000;"></div>
<div class="a" style="left:27px;top:328px;width:493px;height:1px;background:#000;"></div>
<div class="a" style="left:27px;top:349px;width:493px;height:1px;background:#000;"></div>
<div class="a" style="left:27px;top:370px;width:493px;height:1px;background:#000;"></div>
<div class="a" style="left:27px;top:391px;width:493px;height:1px;background:#000;"></div>
<div class="a" style="left:27px;top:412px;width:493px;height:1px;background:#000;"></div>
<div class="a" style="left:27px;top:433px;width:493px;height:1px;background:#000;"></div>
<div class="t" style="left:29.4px;top:238.90px;font-size:14.30px;color:#000;font-weight:bold;">Наименование</div>
<div class="cb" style="left:211px;top:228.99px;width:102px;text-align:center">Стоимость,</div>
<div class="cb" style="left:211px;top:249.99px;width:102px;text-align:center">руб.</div>
<div class="cb" style="left:314px;top:228.99px;width:102px;text-align:center">Количество,</div>
<div class="cb" style="left:314px;top:249.99px;width:102px;text-align:center">шт.</div>
<div class="cb" style="left:417px;top:228.99px;width:102px;text-align:center">Сумма,</div>
<div class="cb" style="left:417px;top:249.99px;width:102px;text-align:center">руб.</div>
<div class="c" style="left:29.4px;top:269.64px;letter-spacing:0.094px">Стол компьютерный</div>
<div class="c" style="left:211px;top:269.64px;width:100px;text-align:right">11 990</div>
<div class="c" style="left:314px;top:269.64px;width:100px;text-align:right">1</div>
<div class="c" style="left:417px;top:269.64px;width:100px;text-align:right">11 990</div>
<div class="c" style="left:29.4px;top:290.64px;letter-spacing:-0.062px">Кресло рабочее</div>
<div class="c" style="left:211px;top:290.64px;width:100px;text-align:right">4 990</div>
<div class="c" style="left:314px;top:290.64px;width:100px;text-align:right">2</div>
<div class="c" style="left:417px;top:290.64px;width:100px;text-align:right">9 980</div>
<div class="c" style="left:29.4px;top:311.64px;letter-spacing:-0.254px">Монитор 24 LED</div>
<div class="c" style="left:211px;top:311.64px;width:100px;text-align:right">14 990</div>
<div class="c" style="left:314px;top:311.64px;width:100px;text-align:right">1</div>
<div class="c" style="left:417px;top:311.64px;width:100px;text-align:right">14 990</div>
<div class="c" style="left:29.4px;top:332.64px;letter-spacing:0.192px">Системный блок</div>
<div class="c" style="left:211px;top:332.64px;width:100px;text-align:right">19 990</div>
<div class="c" style="left:314px;top:332.64px;width:100px;text-align:right">1</div>
<div class="c" style="left:417px;top:332.64px;width:100px;text-align:right">19 990</div>
<div class="c" style="left:29.4px;top:353.64px;letter-spacing:0.212px">Мышь беспроводная</div>
<div class="c" style="left:211px;top:353.64px;width:100px;text-align:right">790</div>
<div class="c" style="left:314px;top:353.64px;width:100px;text-align:right">3</div>
<div class="c" style="left:417px;top:353.64px;width:100px;text-align:right">2 370</div>
<div class="c" style="left:29.4px;top:374.64px;letter-spacing:0.037px">Клавиатура проводная</div>
<div class="c" style="left:211px;top:374.64px;width:100px;text-align:right">1 190</div>
<div class="c" style="left:314px;top:374.64px;width:100px;text-align:right">2</div>
<div class="c" style="left:417px;top:374.64px;width:100px;text-align:right">2 380</div>
<div class="c" style="left:29.4px;top:395.64px;letter-spacing:-0.138px">Сетевой фильтр</div>
<div class="c" style="left:211px;top:395.64px;width:100px;text-align:right">890</div>
<div class="c" style="left:314px;top:395.64px;width:100px;text-align:right">2</div>
<div class="c" style="left:417px;top:395.64px;width:100px;text-align:right">1 780</div>
<div class="c" style="left:29.4px;top:416.64px;letter-spacing:-0.158px">Батарейки AAA</div>
<div class="c" style="left:211px;top:416.64px;width:100px;text-align:right">49</div>
<div class="c" style="left:314px;top:416.64px;width:100px;text-align:right">7</div>
<div class="c" style="left:417px;top:416.64px;width:100px;text-align:right">343</div>
<div class="a" style="left:417px;top:266px;width:102px;height:167px;border:1px solid #fff"></div>
<div class="a" style="left:415px;top:264px;width:106px;height:171px;border:2px solid #107c41"></div>
<div class="a" style="left:516px;top:430px;width:7px;height:7px;background:#107c41;border:1px solid #fff"></div>
<div class="a" style="left:411px;top:260px;width:117px;height:180px;border:4px solid #ff0000;border-radius:8px"></div>
<div class="a" style="left:952px;top:204px;width:20px;height:468px;background:#e6e6e6;"></div>
<div class="a" style="left:955px;top:206px;width:15px;height:14px;background:#fff;border:1px solid #ababab"></div>
<svg class="a" style="left:958px;top:210px" width="9" height="5" viewBox="0 0 9 5"><path d="M0 5h9L4.5 0z" fill="#666"/></svg>
<div class="a" style="left:955px;top:221px;width:15px;height:437px;background:#dcdcdc;"></div>
<div class="a" style="left:955px;top:221px;width:15px;height:414px;background:#fff;border:1px solid #ababab"></div>
<div class="a" style="left:955px;top:658px;width:15px;height:14px;background:#fff;border:1px solid #ababab"></div>
<svg class="a" style="left:958px;top:663px" width="9" height="5" viewBox="0 0 9 5"><path d="M0 0h9L4.5 5z" fill="#666"/></svg>
<div class="a" style="left:1px;top:673px;width:971px;height:27px;background:#e6e6e6;"></div>
<svg class="a" style="left:28px;top:682px" width="4" height="7" viewBox="0 0 4 7"><path d="M4 0v7L0 3.5z" fill="#bdbdbd"/></svg>
<svg class="a" style="left:57px;top:682px" width="4" height="7" viewBox="0 0 4 7"><path d="M0 0v7l4-3.5z" fill="#bdbdbd"/></svg>
<div class="a" style="left:101px;top:672px;width:107px;height:25px;background:#fff;border-left:1px solid #ababab;border-right:1px solid #ababab"></div>
<div class="a" style="left:101px;top:695px;width:107px;height:2px;background:#107c41;"></div>
<div class="t" style="left:113.5px;top:679.63px;font-size:12.60px;color:#107c41;font-weight:bold;">microexcel.ru</div>
<svg class="a" style="left:241px;top:677px" width="17" height="17" viewBox="0 0 17 17"><circle cx="8.5" cy="8.5" r="7.5" fill="none" stroke="#666" stroke-width="1.2"/><path d="M8.5 4v9M4 8.5h9" stroke="#666" stroke-width="1.5"/></svg>
<div class="a" style="left:583px;top:681px;width:2px;height:2px;background:#9a9a9a;"></div>
<div class="a" style="left:583px;top:685px;width:2px;height:2px;background:#9a9a9a;"></div>
<div class="a" style="left:583px;top:689px;width:2px;height:2px;background:#9a9a9a;"></div>
<div class="a" style="left:601px;top:679px;width:15px;height:15px;background:#fff;border:1px solid #ababab"></div>
<svg class="a" style="left:606px;top:683px" width="5" height="8" viewBox="0 0 5 8"><path d="M5 0v8L0 4z" fill="#555"/></svg>
<div class="a" style="left:615px;top:679px;width:322px;height:15px;background:#dcdcdc;"></div>
<div class="a" style="left:615px;top:679px;width:289px;height:15px;background:#fff;border:1px solid #ababab"></div>
<div class="a" style="left:937px;top:679px;width:15px;height:15px;background:#fff;border:1px solid #ababab"></div>
<svg class="a" style="left:942px;top:683px" width="5" height="8" viewBox="0 0 5 8"><path d="M0 0v8l5-4z" fill="#555"/></svg>
<div class="a" style="left:1px;top:700px;width:972px;height:22px;background:#f3f3f3;"></div>
<div class="a" style="left:1px;top:700px;width:972px;height:1px;background:#c8c8c8;"></div>
<svg class="a" style="left:9px;top:704px" width="14" height="14" viewBox="0 0 14 14"><rect x="1.5" y="1.5" width="11" height="11" fill="#fff" stroke="#555"/><path d="M1.5 4.5h11M1.5 7.5h11M1.5 10h11M4.5 4.5v8M8 4.5v8" stroke="#555"/><circle cx="3" cy="3" r="2.8" fill="#666"/></svg>
<div class="t" style="left:398.7px;top:705.12px;font-size:10.85px;color:#262626;">Среднее: 7 978</div>
<div class="t" style="left:492.4px;top:704.73px;font-size:11.30px;color:#262626;">Количество: 8</div>
<div class="t" style="left:582.0px;top:705.24px;font-size:10.70px;color:#262626;">Сумма: 63 823</div>
<div class="a" style="left:673px;top:701px;width:38px;height:20px;background:#c6c6c6;"></div>
<svg class="a" style="left:685px;top:704px" width="13" height="13" viewBox="0 0 13 13"><path d="M0.5 0.5h12v12h-12zM0.5 4.5h12M0.5 8.5h12M4.5 0.5v12M8.5 0.5v12" fill="none" stroke="#555"/></svg>
<svg class="a" style="left:723px;top:704px" width="14" height="13" viewBox="0 0 14 13"><rect x="0.5" y="0.5" width="13" height="12" fill="none" stroke="#555"/><rect x="3.5" y="2.5" width="7" height="8" fill="none" stroke="#555"/><path d="M5 4.5h4M5 6.5h4M5 8.5h4" stroke="#555"/></svg>
<svg class="a" style="left:761px;top:704px" width="15" height="13" viewBox="0 0 15 13"><path d="M0.5 0.5h13v12h-13zM0.5 7.5h8M4.5 0.5v7M8.5 0.5v7" fill="none" stroke="#555"/></svg>
<div class="a" style="left:792px;top:711px;width:6px;height:1.5px;background:#555;"></div>
<div class="a" style="left:802px;top:711px;width:100px;height:1px;background:#999;"></div>
<div class="a" style="left:850px;top:705px;width:5px;height:11px;background:#666;"></div>
<div class="a" style="left:906px;top:710.5px;width:7px;height:1.5px;background:#555;"></div>
<div class="a" style="left:908.8px;top:707.7px;width:1.5px;height:7px;background:#555;"></div>
<div class="t" style="left:925.0px;top:706.17px;font-size:10.20px;color:#262626;">100 %</div>
</body></html>
